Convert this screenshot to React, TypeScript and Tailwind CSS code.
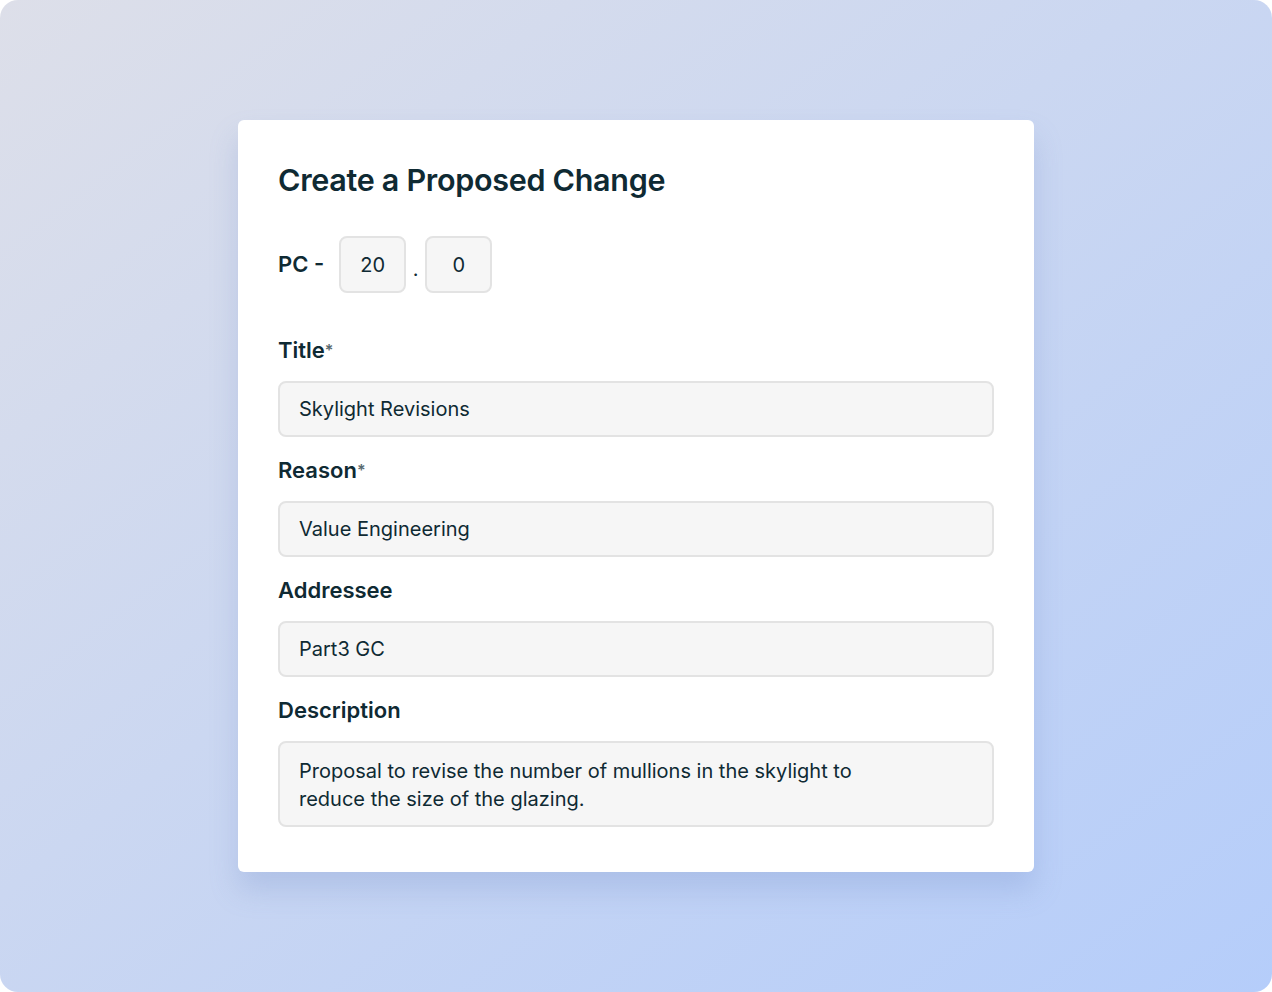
const inputBox =
  "w-full rounded-[8px] border-2 border-[#e3e3e3] bg-[#f6f6f6] px-[19px] text-[20px] text-[#0f2a33]";

function Field({
  label,
  required,
  value,
}: {
  label: string;
  required?: boolean;
  value: string;
}) {
  return (
    <div className="flex flex-col">
      <label className="text-[22px] leading-[30px] font-semibold text-[#0f2a33]">
        {label}
        {required && <span className="align-top text-[16px] text-[#5a6a70]">*</span>}
      </label>
      <div className={`${inputBox} mt-[16px] flex h-[56px] items-center`}>{value}</div>
    </div>
  );
}

export default function App() {
  return (
    <div
      className="flex h-[992px] w-[1272px] justify-center overflow-hidden rounded-[18px] bg-linear-to-br from-[#dddfe9] to-[#b5cdfa] pt-[120px]"
      style={{ fontFamily: "Inter, 'Noto Sans', sans-serif" }}
    >
      <section className="h-[752px] w-[796px] rounded-[6px] bg-white px-10 pt-[40px] shadow-[0_18px_28px_rgba(120,145,200,0.28)]">
        <h1 className="text-[30.5px] leading-[40px] font-semibold tracking-[-0.3px] text-[#0f2a33]">
          Create a Proposed Change
        </h1>

        <div className="mt-[36px] flex h-[57px] items-center text-[#0f2a33]">
          <span className="mr-[15px] text-[22px] font-semibold">PC -</span>
          <div className="flex h-[57px] w-[67px] items-center justify-center rounded-[8px] border-2 border-[#e3e3e3] bg-[#f6f6f6] text-[20px]">
            20
          </div>
          <span className="flex w-[19px] justify-center pt-[8px] text-[20px]">.</span>
          <div className="flex h-[57px] w-[67px] items-center justify-center rounded-[8px] border-2 border-[#e3e3e3] bg-[#f6f6f6] text-[20px]">
            0
          </div>
        </div>

        <div className="mt-[42px] flex flex-col gap-[18px]">
          <Field label="Title" required value="Skylight Revisions" />
          <Field label="Reason" required value="Value Engineering" />
          <Field label="Addressee" value="Part3 GC" />
          <div className="flex flex-col">
            <label className="text-[22px] leading-[30px] font-semibold text-[#0f2a33]">
              Description
            </label>
            <div className={`${inputBox} mt-[16px] h-[86px] pt-[14px] text-[19.8px] leading-[28px]`}>
              Proposal to revise the number of mullions in the skylight to
              <br />
              reduce the size of the glazing.
            </div>
          </div>
        </div>
      </section>
    </div>
  );
}
